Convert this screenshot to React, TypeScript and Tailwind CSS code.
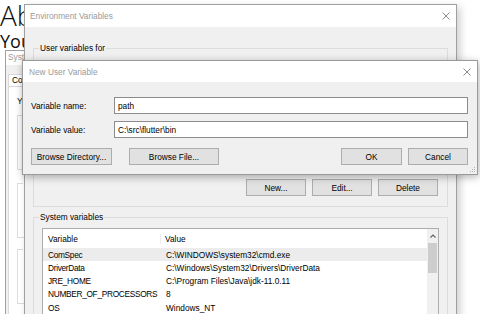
import React from "react";

function CloseX() {
  return (
    <svg width="8" height="8" viewBox="0 0 8 8" className="block">
      <path d="M0.5 0.5L7.5 7.5M7.5 0.5L0.5 7.5" stroke="#7f7f7f" strokeWidth="0.9" />
    </svg>
  );
}

function Btn({ children, w }: { children: React.ReactNode; w: string }) {
  return (
    <div className={`${w} h-[17px] shrink-0 flex items-center justify-center bg-[#e1e1e1] border border-[#adadad] text-black`}>
      {children}
    </div>
  );
}

function TextBox({ value }: { value: string }) {
  return (
    <div className="flex-1 h-[17px] flex items-center pl-[3px] bg-white border border-[#8c8c8c]">{value}</div>
  );
}

const sysVars = [
  ["ComSpec", "C:\\WINDOWS\\system32\\cmd.exe"],
  ["DriverData", "C:\\Windows\\System32\\Drivers\\DriverData"],
  ["JRE_HOME", "C:\\Program Files\\Java\\jdk-11.0.11"],
  ["NUMBER_OF_PROCESSORS", "8"],
  ["OS", "Windows_NT"],
];

function SystemProperties() {
  return (
    <div className="absolute left-[5px] top-[50px] w-[420px] h-[300px] bg-[#f0f0f0] border border-[#a0a0a0]">
      <div className="h-[14px] bg-white pl-[2px] leading-[12px] text-[#9a9a9a]">System Properties</div>
      <div className="pl-[2px] pt-[9px]">
        <div className="flex">
          <div className="h-[12px] px-[3px] bg-white border border-b-0 border-[#d9d9d9] leading-[11px]">Computer Name</div>
          <div className="h-[11px] mt-[1px] px-[3px] border-t border-r border-[#d9d9d9] leading-[10px]">Hardware</div>
        </div>
        <div className="h-[250px] bg-white border border-[#d9d9d9] pl-[8px] pr-[8px] pt-[9px]">
          <div className="leading-[10px]">You must be logged on as an Administrator to make most of these changes.</div>
          <fieldset className="mt-[4px] border border-[#dcdcdc] h-[60px]">
            <legend className="ml-[5px] px-[1px] leading-[10px]">Performance</legend>
          </fieldset>
          <fieldset className="mt-[8px] border border-[#dcdcdc] h-[60px]">
            <legend className="ml-[5px] px-[1px] leading-[10px]">User Profiles</legend>
            <div className="pl-[6px] pt-[3px] leading-[10px]">Desktop settings related to your sign-in</div>
          </fieldset>
          <fieldset className="mt-[6px] border border-[#dcdcdc] h-[60px]">
            <legend className="ml-[5px] px-[1px] leading-[10px]">Startup and Recovery</legend>
            <div className="pl-[6px] pt-[10px] leading-[10px]">System startup, system failure, and debugging information</div>
          </fieldset>
        </div>
      </div>
    </div>
  );
}

function EnvWindow() {
  return (
    <div className="absolute left-[24px] top-[4px] w-[433px] h-[340px] flex flex-col bg-[#f0f0f0] border border-[#a0a0a0] shadow-[3px_3px_8px_rgba(0,0,0,0.2)]">
      <div className="h-[22px] shrink-0 bg-white flex items-center justify-between pl-[5px] pr-[6px] text-[#9a9a9a]">
        <span>Environment Variables</span>
        <CloseX />
      </div>
      <div className="px-[8px]">
        <fieldset className="mt-[16px] border border-[#dcdcdc]">
          <legend className="ml-[5px] px-[1px] leading-[10px]">User variables for</legend>
          <div className="pl-[8px] pr-[9px] pb-[10px]">
            <div className="mt-[11px] h-[108px] bg-white border border-[#adadad]" />
            <div className="mt-[7px] flex justify-end gap-[6px]">
              <Btn w="w-[60px]">New...</Btn>
              <Btn w="w-[60px]">Edit...</Btn>
              <Btn w="w-[60px]">Delete</Btn>
            </div>
          </div>
        </fieldset>
        <fieldset className="mt-[5px] border border-[#dcdcdc]">
          <legend className="ml-[5px] px-[1px] leading-[10px]">System variables</legend>
          <div className="px-[8px] pt-[6px]">
            <div className="h-[120px] flex bg-white border border-[#adadad]">
              <div className="flex-1 flex flex-col">
                <div className="h-[19px] shrink-0 flex items-center">
                  <div className="w-[118px] pl-[5px] border-r border-[#ececec]">Variable</div>
                  <div className="pl-[4px]">Value</div>
                </div>
                {sysVars.map(([name, value], i) => (
                  <div
                    key={name}
                    className={`h-[13.25px] shrink-0 flex items-center ${i === 0 ? "bg-[#ececec]" : ""}`}
                  >
                    <div className="w-[118px] pl-[5px] tracking-[-0.3px] whitespace-nowrap">{name}</div>
                    <div className="pl-[5px] whitespace-nowrap">{value}</div>
                  </div>
                ))}
              </div>
              <div className="w-[11px] shrink-0 flex flex-col bg-[#f0f0f0]">
                <div className="h-[14px] flex items-center justify-center">
                  <svg width="6" height="4" viewBox="0 0 6 4">
                    <path d="M0.5 3.5L3 1L5.5 3.5" fill="none" stroke="#606060" strokeWidth="1.1" />
                  </svg>
                </div>
                <div className="mx-[1px] h-[30px] bg-[#cdcdcd]" />
              </div>
            </div>
          </div>
        </fieldset>
      </div>
    </div>
  );
}

function NewVarDialog() {
  return (
    <div className="absolute left-[22px] top-[60px] w-[456px] h-[115px] flex flex-col bg-[#f0f0f0] border border-[#9a9a9a] shadow-[1px_2px_8px_rgba(0,0,0,0.3)]">
      <div className="h-[21px] shrink-0 bg-white flex items-center justify-between pl-[6px] pr-[6px] text-[#9a9a9a]">
        <span>New User Variable</span>
        <CloseX />
      </div>
      <div className="flex flex-col pl-[8px] pr-[9px] pt-[15px]">
        <div className="flex items-center">
          <div className="w-[83px] shrink-0">Variable name:</div>
          <TextBox value="path" />
        </div>
        <div className="mt-[7px] flex items-center">
          <div className="w-[83px] shrink-0">Variable value:</div>
          <TextBox value="C:\src\flutter\bin" />
        </div>
        <div className="mt-[10px] flex">
          <Btn w="w-[81px]">Browse Directory...</Btn>
          <div className="ml-[17px]">
            <Btn w="w-[90px]">Browse File...</Btn>
          </div>
          <div className="flex-1" />
          <div className="flex gap-[6px]">
            <Btn w="w-[61px]">OK</Btn>
            <Btn w="w-[60px]">Cancel</Btn>
          </div>
        </div>
      </div>
      {/* resize grip */}
      <svg width="6" height="6" viewBox="0 0 6 6" className="absolute right-[1px] bottom-[1px]">
        <rect x="4" y="0" width="1" height="1" fill="#b5b5b5" />
        <rect x="2" y="2" width="1" height="1" fill="#b5b5b5" />
        <rect x="4" y="2" width="1" height="1" fill="#b5b5b5" />
        <rect x="0" y="4" width="1" height="1" fill="#b5b5b5" />
        <rect x="2" y="4" width="1" height="1" fill="#b5b5b5" />
        <rect x="4" y="4" width="1" height="1" fill="#b5b5b5" />
      </svg>
    </div>
  );
}

export default function App() {
  return (
    <div className="relative w-[480px] h-[314px] overflow-hidden bg-white font-['Liberation_Sans',Arial,sans-serif] text-[8.3px] leading-[10px] text-black">
      {/* Settings "About" page behind the dialogs */}
      <div className="-mt-[2px] whitespace-nowrap text-[#111]">
        <div className="text-[28px] leading-[34px] font-light font-['Open_Sans',sans-serif]">About</div>
        <div className="-mt-[2px] text-[18px] leading-[22px] font-['Open_Sans',sans-serif]">Your PC is monitored and protected.</div>
      </div>
      <SystemProperties />
      <EnvWindow />
      <NewVarDialog />
    </div>
  );
}
